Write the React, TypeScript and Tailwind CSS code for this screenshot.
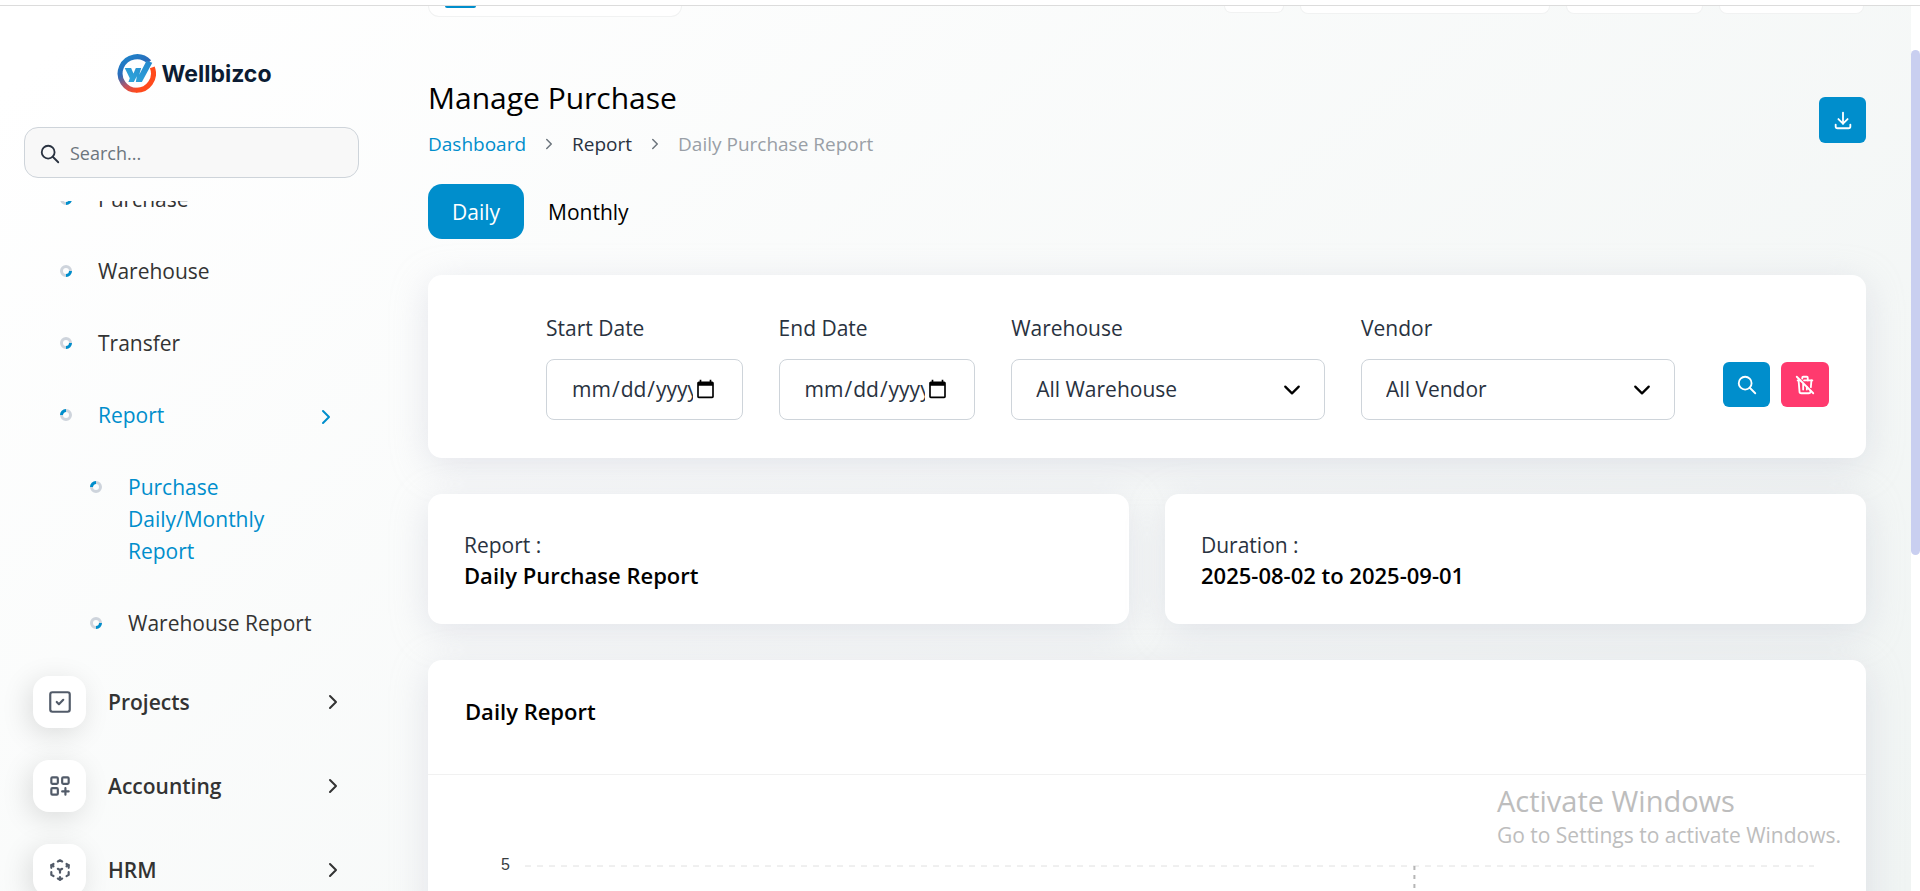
import { useState } from 'react';
import {
  TbChevronRight,
  TbCube3dSphere,
  TbDownload,
  TbLayoutGridAdd,
  TbSearch,
  TbSquareCheck,
  TbTrashOff,
} from 'react-icons/tb';

const CARD = 'rounded-[14px] bg-white shadow-[0_8px_36px_rgba(182,186,203,0.35)]';
const CONTROL =
  'h-[61px] w-full rounded-lg border border-[#ced4da] bg-white pl-6 text-[21px] text-[#293240] outline-none';

function Logo() {
  return (
    <a href="#" className="ml-1 flex items-center gap-1.5">
      <svg viewBox="0 0 116 116" className="size-[39px]" aria-hidden="true">
        <defs>
          <linearGradient id="ring" x1="0.3" y1="0" x2="0.75" y2="0.95">
            <stop offset="0" stopColor="#1f80c8" />
            <stop offset="0.35" stopColor="#2a6cba" />
            <stop offset="0.75" stopColor="#c9525a" />
            <stop offset="1" stopColor="#ff4a1c" />
          </linearGradient>
          <linearGradient id="mark" x1="0" y1="1" x2="1" y2="0">
            <stop offset="0" stopColor="#2fa8dc" />
            <stop offset="1" stopColor="#2486cc" />
          </linearGradient>
        </defs>
        <path d="M96 24A50 50 0 1 0 60 108" fill="none" stroke="url(#ring)" strokeWidth="15" />
        <path d="M105 40A50 50 0 0 1 58 108" fill="none" stroke="#ff4a1c" strokeWidth="15" />
        <path
          d="M23 42H42L49 58L56 42H72L66 62L88 20L105 26L74 83H56L59 66L50 83H34L38 72Z"
          fill="url(#mark)"
        />
      </svg>
      <span className="font-[Inter] text-[23px] leading-8 font-bold text-[#0c1c33]">Wellbizco</span>
    </a>
  );
}

function Ring({ active = false }: { active?: boolean }) {
  return (
    <svg viewBox="0 0 12 12" className="mt-2.5 size-3 shrink-0" fill="none" strokeWidth="3" aria-hidden="true">
      <circle cx="6" cy="6" r="4.5" stroke="#ced4dc" />
      <path d={active ? 'M1.5 6A4.5 4.5 0 0 1 6 1.5' : 'M10.5 6A4.5 4.5 0 0 1 6 10.5'} stroke="#008ecc" />
    </svg>
  );
}

interface SubItemProps {
  label: string;
  active?: boolean;
  nested?: boolean;
  arrow?: boolean;
}

function SubItem({ label, active, nested, arrow }: SubItemProps) {
  return (
    <li>
      <a
        href="#"
        className={`flex items-start gap-[26px] py-5 pr-[30px] text-[21px] leading-8 font-medium ${
          nested ? 'pl-[90px]' : 'pl-[60px]'
        } ${active ? 'text-[#008ecc]' : 'text-[#333]'}`}
      >
        <Ring active={active} />
        <span className={nested && active ? 'w-[150px]' : 'flex-1'}>{label}</span>
        {arrow && <TbChevronRight className="mt-1.5 mr-4 size-6" />}
      </a>
    </li>
  );
}

const modules = [
  { label: 'Projects', icon: TbSquareCheck },
  { label: 'Accounting', icon: TbLayoutGridAdd },
  { label: 'HRM', icon: TbCube3dSphere },
];

function Sidebar() {
  return (
    <aside className="flex w-[384px] shrink-0 flex-col">
      <div className="flex justify-center pt-12">
        <Logo />
      </div>
      <div className="px-6 pt-[34px] pb-[23px]">
        <label className="flex h-[51px] w-[335px] items-center gap-[9px] rounded-[14px] border border-[#ced4da] bg-[#f8f8f8] pt-0.5 pl-3.5">
          <TbSearch className="size-[22px] text-[#293240]" />
          <input
            type="text"
            aria-label="Search"
            placeholder="Search..."
            className="min-w-0 flex-1 bg-transparent text-[18px] outline-none placeholder:text-[#6c757d]"
          />
        </label>
      </div>
      <nav className="min-h-0 flex-1 overflow-hidden">
        <ul className="-mt-[38px]">
          <SubItem label="Purchase" />
          <SubItem label="Warehouse" />
          <SubItem label="Transfer" />
          <SubItem label="Report" active arrow />
          <SubItem label="Purchase Daily/Monthly Report" active nested />
          <SubItem label="Warehouse Report" nested />
        </ul>
        <ul className="flex flex-col gap-8 pt-[17px]">
          {modules.map(({ label, icon: Icon }) => (
            <li key={label}>
              <a href="#" className="flex items-center pl-[33px] text-[21px] leading-8 font-semibold text-[#333]">
                <span className="mr-[22px] flex h-[52px] w-[53px] items-center justify-center rounded-2xl bg-white text-[#525b69] shadow-[-4px_6px_28px_rgba(0,0,0,0.13)]">
                  <Icon className="size-[26px]" />
                </span>
                <span className="flex-1">{label}</span>
                <TbChevronRight className="mr-[39px] size-6" />
              </a>
            </li>
          ))}
        </ul>
      </nav>
    </aside>
  );
}

// bottom edge of the header pills, the rest is scrolled out of view
function ScrolledHeader() {
  const pill = 'rounded-b-[14px] border border-t-0 border-[#f1f2f2] bg-white';
  return (
    <div className="flex items-start pr-0.5">
      <div className={`${pill} h-[11px] w-[254px] pl-4`}>
        <div className="h-0.5 w-[31px] rounded-b bg-[#008ecc]" />
      </div>
      <div className="ml-auto flex gap-4">
        <div className={`${pill} h-[7px] w-[60px]`} />
        <div className={`${pill} h-2 w-[250px]`} />
        <div className={`${pill} h-2 w-[137px]`} />
        <div className={`${pill} h-2 w-[145px]`} />
      </div>
    </div>
  );
}

function DateField({ id, label }: { id: string; label: string }) {
  return (
    <div className="w-[14.4%]">
      <label htmlFor={id} className="mb-[15px] block leading-8">
        {label}
      </label>
      <input id={id} type="date" className={`${CONTROL} pr-6`} />
    </div>
  );
}

function SelectField({ id, label, option }: { id: string; label: string; option: string }) {
  return (
    <div className="w-[23%]">
      <label htmlFor={id} className="mb-[15px] block leading-8">
        {label}
      </label>
      <div className="relative">
        <select id={id} className={`${CONTROL} appearance-none`}>
          <option>{option}</option>
        </select>
        <svg
          viewBox="0 0 16 16"
          fill="none"
          stroke="#000"
          strokeWidth="2"
          strokeLinecap="round"
          strokeLinejoin="round"
          className="pointer-events-none absolute top-1/2 right-6 size-[18px] -translate-y-1/2"
        >
          <path d="m2 5 6 6 6-6" />
        </svg>
      </div>
    </div>
  );
}

function FilterCard() {
  return (
    <form className={`${CARD} flex items-end justify-end gap-9 pt-[37px] pr-[37px] pb-[38px] pl-9 text-[21px] text-[#293240]`}>
      <DateField id="start" label="Start Date" />
      <DateField id="end" label="End Date" />
      <SelectField id="warehouse" label="Warehouse" option="All Warehouse" />
      <SelectField id="vendor" label="Vendor" option="All Vendor" />
      <div className="mb-[13px] ml-3 flex gap-[11px] text-white">
        <button
          type="button"
          aria-label="Apply"
          className="flex h-[45px] w-[47px] items-center justify-center rounded-md bg-[#008ecc]"
        >
          <TbSearch className="size-[22px]" />
        </button>
        <button
          type="button"
          aria-label="Reset"
          className="flex h-[45px] w-12 items-center justify-center rounded-md bg-[#ff3a6e]"
        >
          <TbTrashOff className="size-[22px]" />
        </button>
      </div>
    </form>
  );
}

function InfoCard({ label, value }: { label: string; value: string }) {
  return (
    <div className={`${CARD} flex-1 px-9 pt-9 pb-[34px] leading-[30px]`}>
      <p className="text-[21px] text-[#293240]">{label}</p>
      <p className="text-[22px] font-semibold text-black">{value}</p>
    </div>
  );
}

function ReportCard() {
  return (
    <section className={`${CARD} h-[460px]`}>
      <h5 className="border-b border-[#f1f1f1] px-[37px] pt-[35px] pb-[47px] text-[22px] leading-8 font-semibold text-black">
        Daily Report
      </h5>
      <div className="flex pt-20 pr-[52px] pl-[73px]">
        <span className="w-6 font-['Liberation_Sans'] text-[16px] leading-5 text-[#373d3f]">5</span>
        <svg className="mt-[10px] h-[200px] flex-1" aria-hidden="true">
          <line x1="0" y1="1" x2="100%" y2="1" stroke="#e0e0e0" strokeDasharray="6 6" />
          <line x1="69%" y1="1" x2="69%" y2="200" stroke="#b6b6b6" strokeWidth="2" strokeDasharray="4 5" />
        </svg>
      </div>
    </section>
  );
}

export default function App() {
  const [tab, setTab] = useState('Daily');

  return (
    <div className="relative flex h-screen flex-col overflow-hidden bg-white font-['Open_Sans','Noto_Sans',sans-serif]">
      <div className="h-1.5 shrink-0 border-b border-[#dcdcdc]" />
      <div className="flex min-h-0 flex-1">
        <div className="flex min-w-0 flex-1 bg-[linear-gradient(141.55deg,rgba(240,244,243,0)_3.46%,#f0f4f3_99.86%)]">
          <Sidebar />
          <main className="min-w-0 flex-1 overflow-hidden pr-[45px] pl-11">
            <ScrolledHeader />
            <div className="mt-[63px] flex items-start justify-between">
              <div>
                <h4 className="text-[30px] leading-9 font-medium text-black">Manage Purchase</h4>
                <nav className="mt-3 flex items-center gap-3.5 text-[19px] leading-8">
                  <a href="#" className="text-[#008ecc]">
                    Dashboard
                  </a>
                  <TbChevronRight className="size-[18px] text-[#6c757d]" />
                  <span className="text-[#293240]">Report</span>
                  <TbChevronRight className="size-[18px] text-[#6c757d]" />
                  <span className="text-[#999fa6]">Daily Purchase Report</span>
                </nav>
              </div>
              <button
                type="button"
                aria-label="Download"
                className="mt-[17px] flex h-[46px] w-[47px] items-center justify-center rounded-md bg-[#008ecc] text-white"
              >
                <TbDownload className="size-[22px]" />
              </button>
            </div>
            <div className="mt-6 flex text-[21px] leading-8">
              {['Daily', 'Monthly'].map((name) => (
                <button
                  key={name}
                  type="button"
                  onClick={() => setTab(name)}
                  className={`h-[55px] rounded-[14px] px-6 ${tab === name ? 'bg-[#008ecc] text-white' : 'text-black'}`}
                >
                  {name}
                </button>
              ))}
            </div>
            <div className="mt-9 flex flex-col gap-9">
              <FilterCard />
              <div className="flex gap-9">
                <InfoCard label="Report :" value="Daily Purchase Report" />
                <InfoCard label="Duration :" value="2025-08-02 to 2025-09-01" />
              </div>
              <ReportCard />
            </div>
          </main>
        </div>
        <div className="w-[9px] shrink-0 pt-11">
          <div className="h-[60%] rounded-full bg-[#c9cff0]" />
        </div>
      </div>
      <div className="pointer-events-none absolute right-[79px] bottom-[42px] text-[#bdbdbd]">
        <p className="text-[29px] leading-10">Activate Windows</p>
        <p className="text-[21px] leading-7">Go to Settings to activate Windows.</p>
      </div>
    </div>
  );
}
